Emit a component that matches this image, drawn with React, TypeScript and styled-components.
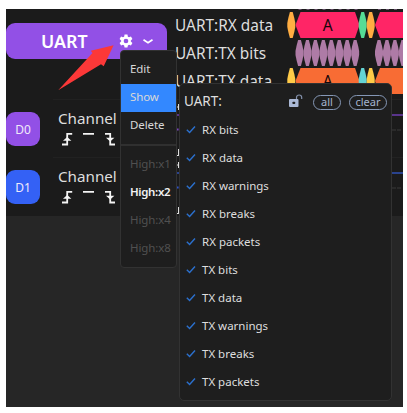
import React from "react";
import styled, { createGlobalStyle } from "styled-components";

const GlobalStyle = createGlobalStyle`
  * { box-sizing: border-box; }
  body { margin: 0; background: #fff; overflow: hidden; font-family: "Noto Sans", sans-serif; color: #dedede; }
  svg { display: block; flex: none; }
`;

const Screen = styled.div`
  position: relative;
  width: 407px;
  height: 413px;
  padding: 9px 4px 6px 6px;
`;

const Workspace = styled.main`
  display: flex;
  flex-direction: column;
  width: 397px;
  height: 398px;
  background: #262626;
  overflow: hidden;
`;

const Capture = styled.section`
  display: grid;
  grid-template-columns: 168px 229px;
  height: 207px;
  background: #1b1b1b;
  overflow: hidden;
`;

const Sidebar = styled.div`
  display: flex;
  flex-direction: column;
  padding-top: 14px;
`;

const DecoderButton = styled.div`
  display: flex;
  align-items: center;
  width: 161px;
  height: 36px;
  margin-bottom: 40px;
  padding-left: 35px;
  border-radius: 9px;
  background: #9250e6;
  color: #fff;
`;

const DecoderName = styled.span`
  width: 78px;
  font-size: 17.8px;
  font-weight: 600;
  line-height: 36px;
`;

const ChannelRow = styled.div`
  display: flex;
  align-items: center;
  height: 58px;
`;

const Badge = styled.div<{ $color: string }>`
  display: flex;
  align-items: center;
  justify-content: center;
  width: 34px;
  height: 34px;
  margin-top: 2px;
  border-radius: 9px;
  background: ${(p) => p.$color};
  color: #f0eafa;
  font-size: 12px;
`;

const ChannelBody = styled.div`
  flex: 1;
  height: 58px;
  margin-left: 13px;
  padding: 8px 0 0 5px;
  border-top: 1px solid #212121;
`;

const ChannelName = styled.div`
  height: 23px;
  font-size: 15.2px;
  line-height: 20px;
`;

const Traces = styled.div`
  display: flex;
  flex-direction: column;
  padding-top: 2px;
`;

const TraceRow = styled.div`
  display: flex;
  height: 28px;
`;

const TraceLabel = styled.div`
  width: 112px;
  padding-left: 1px;
  font-size: 15.4px;
  line-height: 29px;
  white-space: nowrap;
`;

const DigitalTraces = styled.div`
  margin-top: 4px;
`;

const ContextMenu = styled.div`
  position: absolute;
  left: 120px;
  top: 50px;
  width: 57px;
  height: 218px;
  border: 1px solid #323232;
  border-radius: 4px;
  background: #1e1e1e;
  padding-top: 5px;
`;

const MenuItem = styled.div<{ $active?: boolean; $muted?: boolean; $strong?: boolean }>`
  height: 28px;
  padding-left: 9px;
  font-size: 11.5px;
  line-height: 26px;
  white-space: nowrap;
  font-weight: ${(p) => (p.$strong ? 600 : 400)};
  letter-spacing: ${(p) => (p.$strong ? "-0.35px" : "-0.1px")};
  color: ${(p) => (p.$muted ? "#505050" : p.$strong ? "#f2f2f2" : "#d8d8d8")};
  background: ${(p) => (p.$active ? "#3388ff" : "transparent")};
`;

const Divider = styled.div`
  height: 2px;
  margin: 4px 0 5px;
  background: #303030;
`;

const Submenu = styled.div`
  position: absolute;
  left: 179px;
  top: 83px;
  width: 213px;
  height: 318px;
  border: 1px solid #323232;
  border-radius: 5px;
  background: #1e1e1e;
`;

const SubmenuHeader = styled.div`
  display: flex;
  align-items: center;
  height: 33px;
  padding-left: 4px;
`;

const SubmenuTitle = styled.span`
  width: 104px;
  font-size: 13.5px;
  line-height: 20px;
`;

const LockSlot = styled.span`
  width: 17px;
`;

const Pill = styled.span<{ $width: number }>`
  display: flex;
  align-items: center;
  justify-content: center;
  width: ${(p) => p.$width}px;
  height: 15px;
  margin: 3px 0 0 8px;
  border: 1px solid #8597b5;
  border-radius: 8px;
  color: #a5b4cf;
  font-size: 11px;
  line-height: 12px;
`;

const PillGroup = styled.div`
  display: flex;
`;

const Option = styled.div`
  display: flex;
  align-items: center;
  gap: 6px;
  height: 28px;
  padding-left: 6px;
  padding-bottom: 3px;
  font-size: 11.5px;
  line-height: 24px;
`;

const starts = [0, 1, 2, 3, 4, 5, 6, 7];

function lens(x: number) {
  return `M${x} 16V12L${x + 1} 7 L${x + 2.6} 1 H${x + 5.4} L${x + 7} 7 L${x + 8} 12V16 L${x + 7} 21 L${x + 5.4} 27 H${x + 2.6} L${x + 1} 21Z`;
}

function Packets({ start, body, stop }: { start: string; body: string; stop: string }) {
  return (
    <svg width="117" height="28" viewBox="0 0 117 28">
      <path d={lens(1.3)} fill={start} />
      <path d="M9.5 14 L14.5 1H69L73.5 14L69 27H14.5Z" fill={body} />
      <path d={lens(72.7)} fill={stop} />
      <path d={lens(80.7)} fill={start} />
      <path d="M89 14L94 1H117V27H94Z" fill={body} />
      <text x="41.7" y="20" textAnchor="middle" fontSize="15.5" fontFamily="Noto Sans, sans-serif" fill="#16050a">A</text>
    </svg>
  );
}

function Bits() {
  return (
    <svg width="117" height="28" viewBox="0 0 117 28" fill="#ae7ba6">
      {starts.map((n) => <path key={n} d={lens(9.5 + n * 7.95)} />)}
      {starts.slice(0, 4).map((n) => <path key={n} d={lens(89 + n * 7.95)} />)}
    </svg>
  );
}

const PreviousRow = styled.div`
  height: 2px;
  margin-top: -2px;
`;

function PreviousBits() {
  return (
    <svg width="229" height="2" viewBox="0 0 229 2" fill="#68506a">
      {starts.map((n) => <rect key={n} x={124.5 + n * 8} width="3" height="1" />)}
      {starts.slice(0, 3).map((n) => <rect key={n} x={204 + n * 8} width="3" height="1" />)}
    </svg>
  );
}

function ChannelTrace({ color, tone }: { color: string; tone: string }) {
  return (
    <svg width="229" height="58" viewBox="0 0 229 58">
      <path d="M0 .5H229" stroke="#222" />
      <path d="M2.5 8h3.5M4.5 5v6" stroke="#ddd" />
      <path d="M3 16H229" stroke={color} strokeWidth="2" />
      <path d="M3.2 30.5h1.3" stroke={tone} strokeWidth="2" />
      <path d="M218 31H227" stroke="#303030" strokeWidth="1.4" strokeDasharray="4 1" />
      <path d="M4.5 50v6M3 56.5h3" stroke="#ddd" fill="none" />
    </svg>
  );
}

function Gear() {
  return (
    <svg width="14" height="14" viewBox="0 0 24 24" fill="#fff">
      <path fillRule="evenodd" d="M9.5 1h5l.7 3.5 2 1.1 3.3-1.3L23 8.6 20.3 11v2l2.7 2.4-2.5 4.3-3.3-1.2-2 1.1-.7 3.4h-5l-.7-3.4-2-1.1-3.3 1.2L1 15.4 3.7 13v-2L1 8.6l2.5-4.3 3.3 1.3 2-1.1ZM12 8a4 4 0 1 0 0 8 4 4 0 0 0 0-8Z" />
    </svg>
  );
}

function TriggerEdges() {
  return (
    <svg width="60" height="16" viewBox="0 0 60 16" fill="none" stroke="#f4f4f4" strokeWidth="1.8">
      <path d="M4 13.5h5.2V2.9h5M25 2.9h11M47 2.9h5.2v10.6H57" />
      <path d="M5 9.8 9.2 6l4.2 3.8ZM48 6.8l4.2 3.8 4.2-3.8Z" fill="#f4f4f4" stroke="none" />
    </svg>
  );
}

function OpenLock() {
  return (
    <svg width="17" height="14" viewBox="0 0 17 14">
      <rect x="1" y="5" width="9.5" height="8" rx="1" fill="#aab8d5" />
      <path d="M8.5 5V3.6a2.6 2.6 0 0 1 5.2 0V5" stroke="#8290aa" strokeWidth="1.2" fill="none" />
      <rect x="4.3" y="7.7" width="3" height="2.3" rx="1" fill="#1e1e1e" />
    </svg>
  );
}

function Check() {
  return (
    <svg width="10" height="9" viewBox="0 0 10 9" fill="none" stroke="#2b70ce" strokeWidth="1.4">
      <path d="m.8 4.8 2.8 2.7 5.4-6" />
    </svg>
  );
}

const Pointer = styled.svg`
  position: absolute;
  left: 56px;
  top: 43px;
`;

const options = ["RX bits", "RX data", "RX warnings", "RX breaks", "RX packets", "TX bits", "TX data", "TX warnings", "TX breaks", "TX packets"];

export default function App() {
  return (
    <Screen>
      <GlobalStyle />
      <Workspace>
        <Capture>
          <Sidebar>
            <DecoderButton>
              <DecoderName>UART</DecoderName>
              <Gear />
              <svg width="24" height="10" viewBox="0 0 24 10" fill="none" stroke="#fff" strokeWidth="1.7">
                <path d="m10.5 3.8 4.5 3 4.5-3" />
              </svg>
            </DecoderButton>
            {[{ id: "D0", color: "#9250e6" }, { id: "D1", color: "#3461f5" }].map((channel) => (
              <ChannelRow key={channel.id}>
                <Badge $color={channel.color}>{channel.id}</Badge>
                <ChannelBody>
                  <ChannelName>Channel</ChannelName>
                  <TriggerEdges />
                </ChannelBody>
              </ChannelRow>
            ))}
          </Sidebar>
          <Traces>
            <PreviousRow><PreviousBits /></PreviousRow>
            <TraceRow>
              <TraceLabel>UART:RX data</TraceLabel>
              <Packets start="#ffad42" body="#ff2566" stop="#55dc96" />
            </TraceRow>
            <TraceRow>
              <TraceLabel>UART:TX bits</TraceLabel>
              <Bits />
            </TraceRow>
            <TraceRow>
              <TraceLabel>UART:TX data</TraceLabel>
              <Packets start="#ffcb48" body="#f86c34" stop="#64d4d4" />
            </TraceRow>
            <DigitalTraces>
              <ChannelTrace color="#59348b" tone="#9250e6" />
              <ChannelTrace color="#2a438e" tone="#3461f5" />
            </DigitalTraces>
          </Traces>
        </Capture>
      </Workspace>
      <Pointer width="60" height="50" viewBox="0 0 60 50">
        <path d="M2.2 47.3 36.5 10 34.8 7.8 57.6 2.2 47.7 23.2 45 21.2Z" fill="#fc3838" />
      </Pointer>
      <ContextMenu>
        <MenuItem>Edit</MenuItem>
        <MenuItem $active>Show</MenuItem>
        <MenuItem>Delete</MenuItem>
        <Divider />
        <MenuItem $muted>High:x1</MenuItem>
        <MenuItem $strong>High:x2</MenuItem>
        <MenuItem $muted>High:x4</MenuItem>
        <MenuItem $muted>High:x8</MenuItem>
      </ContextMenu>
      <Submenu>
        <SubmenuHeader>
          <SubmenuTitle>UART:</SubmenuTitle>
          <LockSlot><OpenLock /></LockSlot>
          <PillGroup>
            <Pill $width={28}>all</Pill>
            <Pill $width={38}>clear</Pill>
          </PillGroup>
        </SubmenuHeader>
        {options.map((name) => <Option key={name}><Check />{name}</Option>)}
      </Submenu>
    </Screen>
  );
}
